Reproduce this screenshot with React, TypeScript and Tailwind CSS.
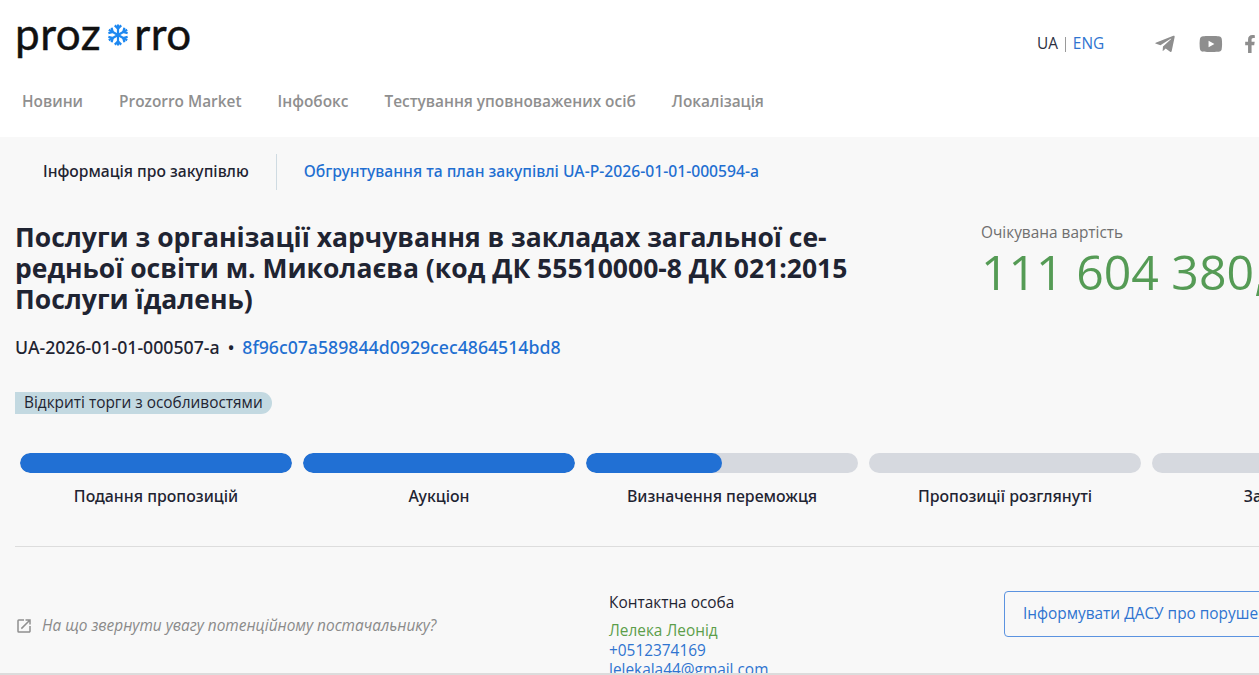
import { FaFacebookF, FaTelegramPlane, FaYoutube } from "react-icons/fa";
import { MdOpenInNew } from "react-icons/md";

const navItems = [
  "Новини",
  "Prozorro Market",
  "Інфобокс",
  "Тестування уповноважених осіб",
  "Локалізація",
];

const steps = [
  { title: "Подання пропозицій", fill: "w-full" },
  { title: "Аукціон", fill: "w-full" },
  { title: "Визначення переможця", fill: "w-1/2" },
  { title: "Пропозиції розглянуті", fill: "w-0" },
  { title: "Завершена", fill: "w-0" },
];

const Snowflake = () => (
  <svg viewBox="0 0 24 24" className="w-[22px] h-[24px] ml-[6px] mr-[5px] mt-[3px]" fill="none" stroke="#1e88f0" strokeWidth="2.4">
    <path d="M12 0.5v23M2 6.2l20 11.6M22 6.2l-20 11.6" />
    <path d="M8.5 1.5l3.5 3.5 3.5-3.5M8.5 22.5l3.5-3.5 3.5 3.5M1.5 10l4.8-1.2-1.3-4.8M22.500 14l-4.800 1.200 1.300 4.800M22.500 10l-4.800-1.200 1.300-4.800M1.500 14l4.800 1.200-1.300 4.800" />
  </svg>
);

const App = () => {
  return (
    <div className="relative w-[1259px] h-[675px] overflow-hidden bg-[#f8f8f8] font-['Open_Sans','Noto_Sans',sans-serif] text-[15.4px] text-[#1f2432]">
      <header className="h-[137px] bg-white">
        <div className="flex justify-between h-[84px]">
          <div className="flex items-center h-[66px] pl-[15px] font-['Lato',sans-serif] text-[44px] leading-none tracking-[0.5px] text-[#111] [-webkit-text-stroke:0.4px_#111]">
            <span>proz</span>
            <Snowflake />
            <span>rro</span>
          </div>
          <div className="flex items-center h-[88px] w-[222px] shrink-0 text-[#8e8e8e]">
            <span className="text-[#2b3040]">UA</span>
            <span className="mx-[7px] h-[15px] w-px bg-[#9a9a9a]" />
            <span className="text-[#2f74d0]">ENG</span>
            <FaTelegramPlane className="ml-[51px] text-[22px]" />
            <FaYoutube className="ml-[24px] text-[26px]" />
            <FaFacebookF className="ml-[18px] text-[18px] shrink-0" />
          </div>
        </div>
        <nav className="flex gap-[36px] pl-[22px] pt-[4px] font-semibold leading-[28px] text-[#8f8f8f]">
          {navItems.map((item) => (
            <span key={item}>{item}</span>
          ))}
        </nav>
      </header>

      <div className="flex items-center h-[36px] mt-[17px] pl-[43px] font-['Noto_Sans',sans-serif] text-[15.7px] font-medium">
        <span className="pr-[27px]">Інформація про закупівлю</span>
        <span className="h-[36px] w-px bg-[#cfdbe2]" />
        <span className="pl-[27px] text-[#1f6fd1]">
          Обгрунтування та план закупівлі UA-P-2026-01-01-000594-a
        </span>
      </div>

      <div className="flex mt-[32px] pl-[15px] w-[1500px]">
        <div className="w-[966px] shrink-0">
          <h1 className="w-[850px] text-[26.5px] font-bold leading-[31px]">
            Послуги з організації харчування в закладах загальної се-
            <br />
            редньої освіти м. Миколаєва (код ДК 55510000-8 ДК 021:2015
            <br />
            Послуги їдалень)
          </h1>
          <div className="flex items-center mt-[19px] font-['Noto_Sans',sans-serif] text-[17.7px] font-medium leading-[26px]">
            <span>UA-2026-01-01-000507-a</span>
            <span className="mx-[8px]">•</span>
            <span className="text-[#1f6fd1]">8f96c07a589844d0929cec4864514bd8</span>
          </div>
          <div className="mt-[32px] w-fit h-[22px] rounded-l-[3px] rounded-r-full bg-[#c3d9e1] pl-[9px] pr-[9px] leading-[22px]">
            Відкриті торги з особливостями
          </div>
        </div>
        <div className="pt-[1px]">
          <div className="leading-[20px] text-[#6f6f6f]">Очікувана вартість</div>
          <div className="-mt-[2px] text-[48.2px] leading-[60px] whitespace-nowrap text-[#559b55]">111 604 380,00</div>
        </div>
      </div>

      <div className="flex gap-[11px] mt-[39px] pl-[20px] w-[1500px]">
        {steps.map((step) => (
          <div key={step.title} className="w-[272px] shrink-0">
            <div className="h-[20px] rounded-full bg-[#d6d9df] overflow-hidden">
              <div className={`h-full rounded-full bg-[#2170d4] ${step.fill}`} />
            </div>
            <div className="mt-[13px] text-center font-['Noto_Sans',sans-serif] text-[15.9px] leading-[20px] font-medium">{step.title}</div>
          </div>
        ))}
      </div>

      <div className="mt-[40px] ml-[15px] h-px bg-[#dddddd]" />

      <div className="flex pt-[46px] pl-[15px] w-[1600px]">
        <div className="flex items-center w-[594px] shrink-0 h-[48px] pt-[18px] italic text-[#8a8a8a]">
          <MdOpenInNew className="mr-[9px] text-[18px] text-[#8f8f8f]" />
          <span>На що звернути увагу потенційному постачальнику?</span>
        </div>
        <div className="w-[395px] shrink-0">
          <div className="leading-[20px]">Контактна особа</div>
          <div className="mt-[8px] leading-[20px] text-[#5c9e4a]">Лелека Леонід</div>
          <div className="leading-[20px] text-[#2f74d0]">+0512374169</div>
          <div className="leading-[18px] text-[#2f74d0]">lelekala44@gmail.com</div>
        </div>
        <div className="flex items-center w-[400px] h-[46px] px-[18px] -mt-[2px] rounded-[4px] border border-[#5b93e0] text-[#2f74d0] whitespace-nowrap">
          Інформувати ДАСУ про порушення
        </div>
      </div>

      <div className="absolute left-0 bottom-0 w-full h-[2px] bg-[#dcdcdc]" />
    </div>
  );
};

export default App;
